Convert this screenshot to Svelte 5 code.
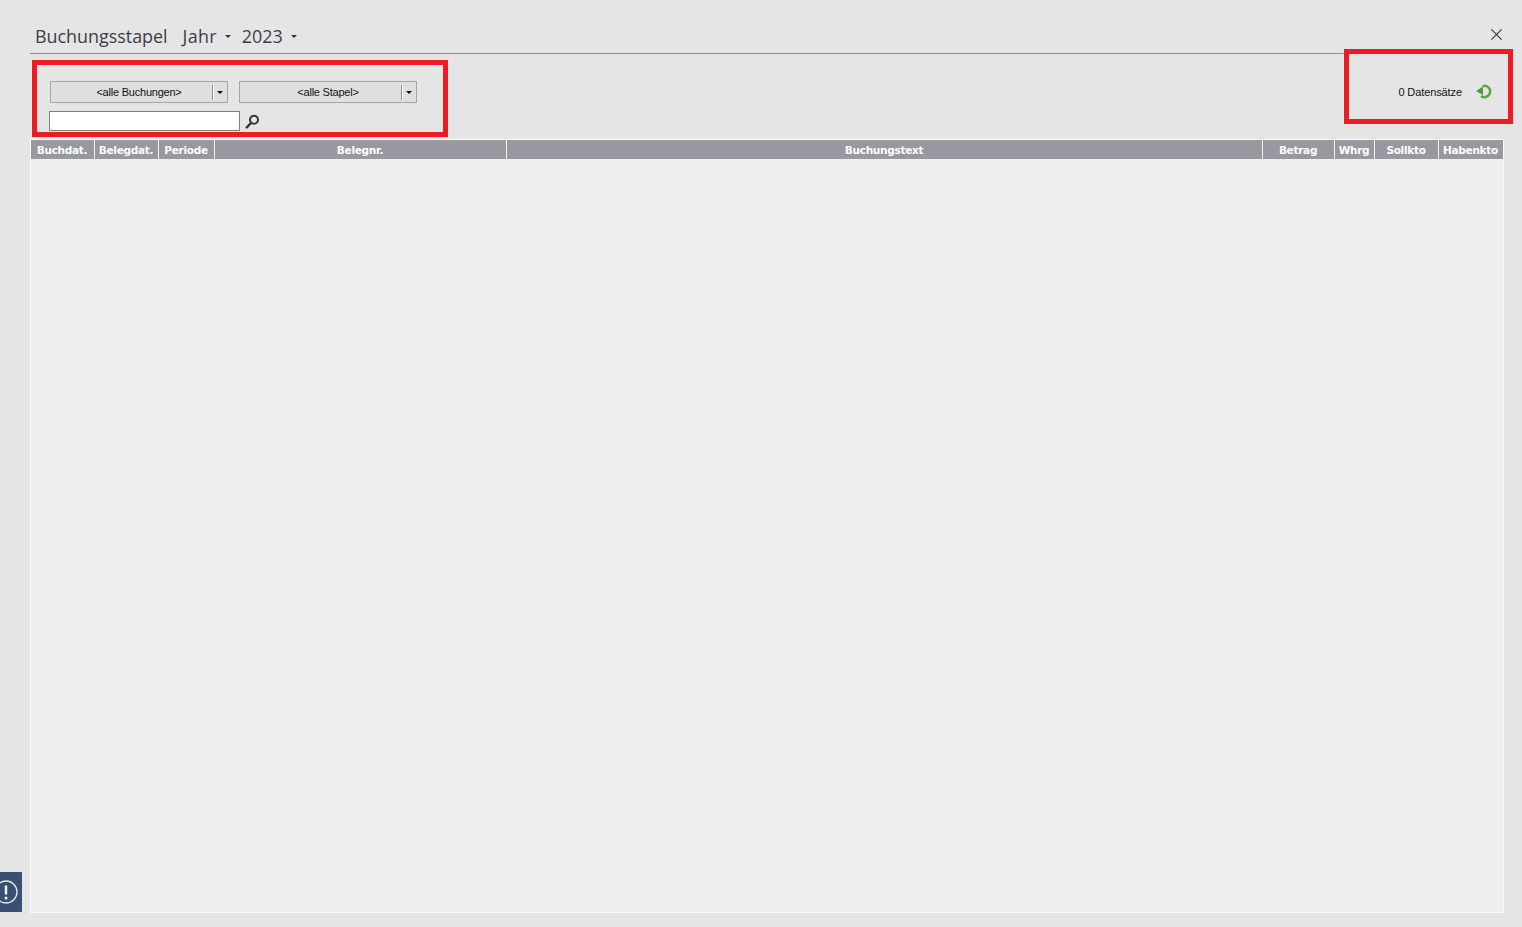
<script>
  const columns = [
    { label: 'Buchdat.', width: 64 },
    { label: 'Belegdat.', width: 64 },
    { label: 'Periode', width: 56 },
    { label: 'Belegnr.', width: 292 },
    { label: 'Buchungstext', width: 756 },
    { label: 'Betrag', width: 72 },
    { label: 'Whrg', width: 40 },
    { label: 'Sollkto', width: 64 },
    { label: 'Habenkto', width: 64 }
  ];
</script>

<div class="page">
  <header class="titlebar">
    <span class="title">Buchungsstapel</span>
    <span class="menu jahr">Jahr<i class="caret"></i></span>
    <span class="menu year">2023<i class="caret"></i></span>
    <svg class="close" width="11" height="11" viewBox="0 0 11 11" aria-label="close">
      <path d="M.4.4l10.2 10.2M10.6.4L.4 10.6" stroke="#333" stroke-width="1.1" fill="none" />
    </svg>
  </header>

  <section class="toolbar">
    <div class="filters">
      <div class="selects">
        <div class="select"><span class="value">&lt;alle Buchungen&gt;</span><span class="sep"></span><span class="arrow"></span></div>
        <div class="select"><span class="value">&lt;alle Stapel&gt;</span><span class="sep"></span><span class="arrow"></span></div>
      </div>
      <div class="search">
        <input type="text" />
        <svg width="15" height="15" viewBox="0 0 15 15">
          <circle cx="9" cy="5.8" r="4" fill="none" stroke="#333" stroke-width="2" />
          <path d="M6 9L1.8 13.4" stroke="#333" stroke-width="2.4" stroke-linecap="round" />
        </svg>
      </div>
    </div>
    <div class="status">
      <span>0 Datensätze</span>
      <svg width="17" height="16" viewBox="0 0 17 16">
        <path d="M6.6 2.1A5.7 5.7 0 1 1 5 12" fill="none" stroke="#5aa83c" stroke-width="2.5" />
        <path d="M0 7l7-4.6v8.6z" fill="#4f9a35" />
      </svg>
    </div>
  </section>

  <main class="grid">
    <div class="head">
      {#each columns as col}
        <div class="cell" style="width:{col.width}px">{col.label}</div>
      {/each}
    </div>
  </main>

  <div class="mark mark-left"></div>
  <div class="mark mark-right"></div>
  <div class="notice">
    <svg width="22" height="40" viewBox="0 0 22 40">
      <circle cx="6" cy="20" r="11" fill="none" stroke="#e6e9ee" stroke-width="1.3" />
      <path d="M6 13.5v9" stroke="#f4f5f7" stroke-width="2.4" />
      <circle cx="6" cy="26" r="1.5" fill="#f4f5f7" />
    </svg>
  </div>
</div>

<style>
  :global(body) {
    margin: 0;
    background: #e5e5e5;
  }
  .page {
    height: 927px;
    box-sizing: border-box;
    padding: 0 10px 14px 30px;
    position: relative;
    overflow: hidden;
    display: flex;
    flex-direction: column;
    font-family: "Liberation Sans", Arial, sans-serif;
    color: #222;
  }
  .titlebar {
    height: 54px;
    box-sizing: border-box;
    border-bottom: 1px solid #8c8c8c;
    display: flex;
    align-items: center;
    padding: 19px 10px 0 5px;
    font-family: "Open Sans", sans-serif;
    font-size: 17.9px;
    color: #3a3f47;
  }
  .menu {
    display: inline-flex;
    align-items: center;
  }
  .jahr {
    margin-left: 15px;
    letter-spacing: 0.3px;
  }
  .year {
    margin-left: 11px;
  }
  .caret {
    display: inline-block;
    margin-left: 8px;
    border-left: 3px solid transparent;
    border-right: 3px solid transparent;
    border-top: 3px solid #333;
  }
  .close {
    margin-left: auto;
    margin-top: -4px;
  }
  .toolbar {
    height: 85px;
    display: flex;
    justify-content: space-between;
    box-sizing: border-box;
    padding: 27px 19px 0 19px;
    font-size: 11px;
    letter-spacing: -0.1px;
  }
  .selects {
    display: flex;
    gap: 11px;
    margin-left: 1px;
  }
  .select {
    width: 178px;
    height: 22px;
    box-sizing: border-box;
    border: 1px solid #a6a6a6;
    background: #dfdfdf;
    display: flex;
    align-items: center;
    color: #111;
    letter-spacing: -0.22px;
  }
  .value {
    flex: 1;
    text-align: center;
    padding-left: 15px;
  }
  .sep {
    width: 1px;
    height: 15px;
    background: #8f8f8f;
    border-right: 1px solid #fff;
  }
  .arrow {
    margin: 1px 4px 0 3px;
    border-left: 3px solid transparent;
    border-right: 3px solid transparent;
    border-top: 3px solid #111;
  }
  .search {
    display: flex;
    align-items: center;
    gap: 5px;
    margin-top: 8px;
  }
  input {
    width: 191px;
    height: 20px;
    box-sizing: border-box;
    border: 1px solid #7f7f7f;
    background: #fff;
    padding: 0;
    margin: 0;
    outline: none;
  }
  .status {
    display: flex;
    align-items: center;
    gap: 14px;
    height: 22px;
    color: #111;
  }
  .grid {
    flex: 1;
    background: #efefef;
    border: 1px solid #fafafa;
    width: 1474px;
    box-sizing: border-box;
  }
  .head {
    display: flex;
    height: 19px;
    background: #98989e;
  }
  .cell {
    box-sizing: border-box;
    border-right: 1px solid #f4f4f4;
    padding-right: 1px;
    color: #fff;
    font-family: "DejaVu Sans", sans-serif;
    font-weight: 700;
    font-size: 10.5px;
    letter-spacing: -0.28px;
    line-height: 20px;
    text-align: center;
    white-space: nowrap;
    overflow: hidden;
  }
  .cell:last-child {
    border-right: 0;
  }
  .mark {
    position: absolute;
    box-sizing: border-box;
    border: 5px solid #ed1c24;
    pointer-events: none;
  }
  .mark-left {
    left: 32px;
    top: 60px;
    width: 416px;
    height: 77px;
  }
  .mark-right {
    left: 1344px;
    top: 49px;
    width: 169px;
    height: 75px;
  }
  .notice {
    position: absolute;
    left: 0;
    top: 872px;
    width: 22px;
    height: 40px;
    background: #3a5070;
  }
  .notice svg {
    display: block;
  }
</style>
